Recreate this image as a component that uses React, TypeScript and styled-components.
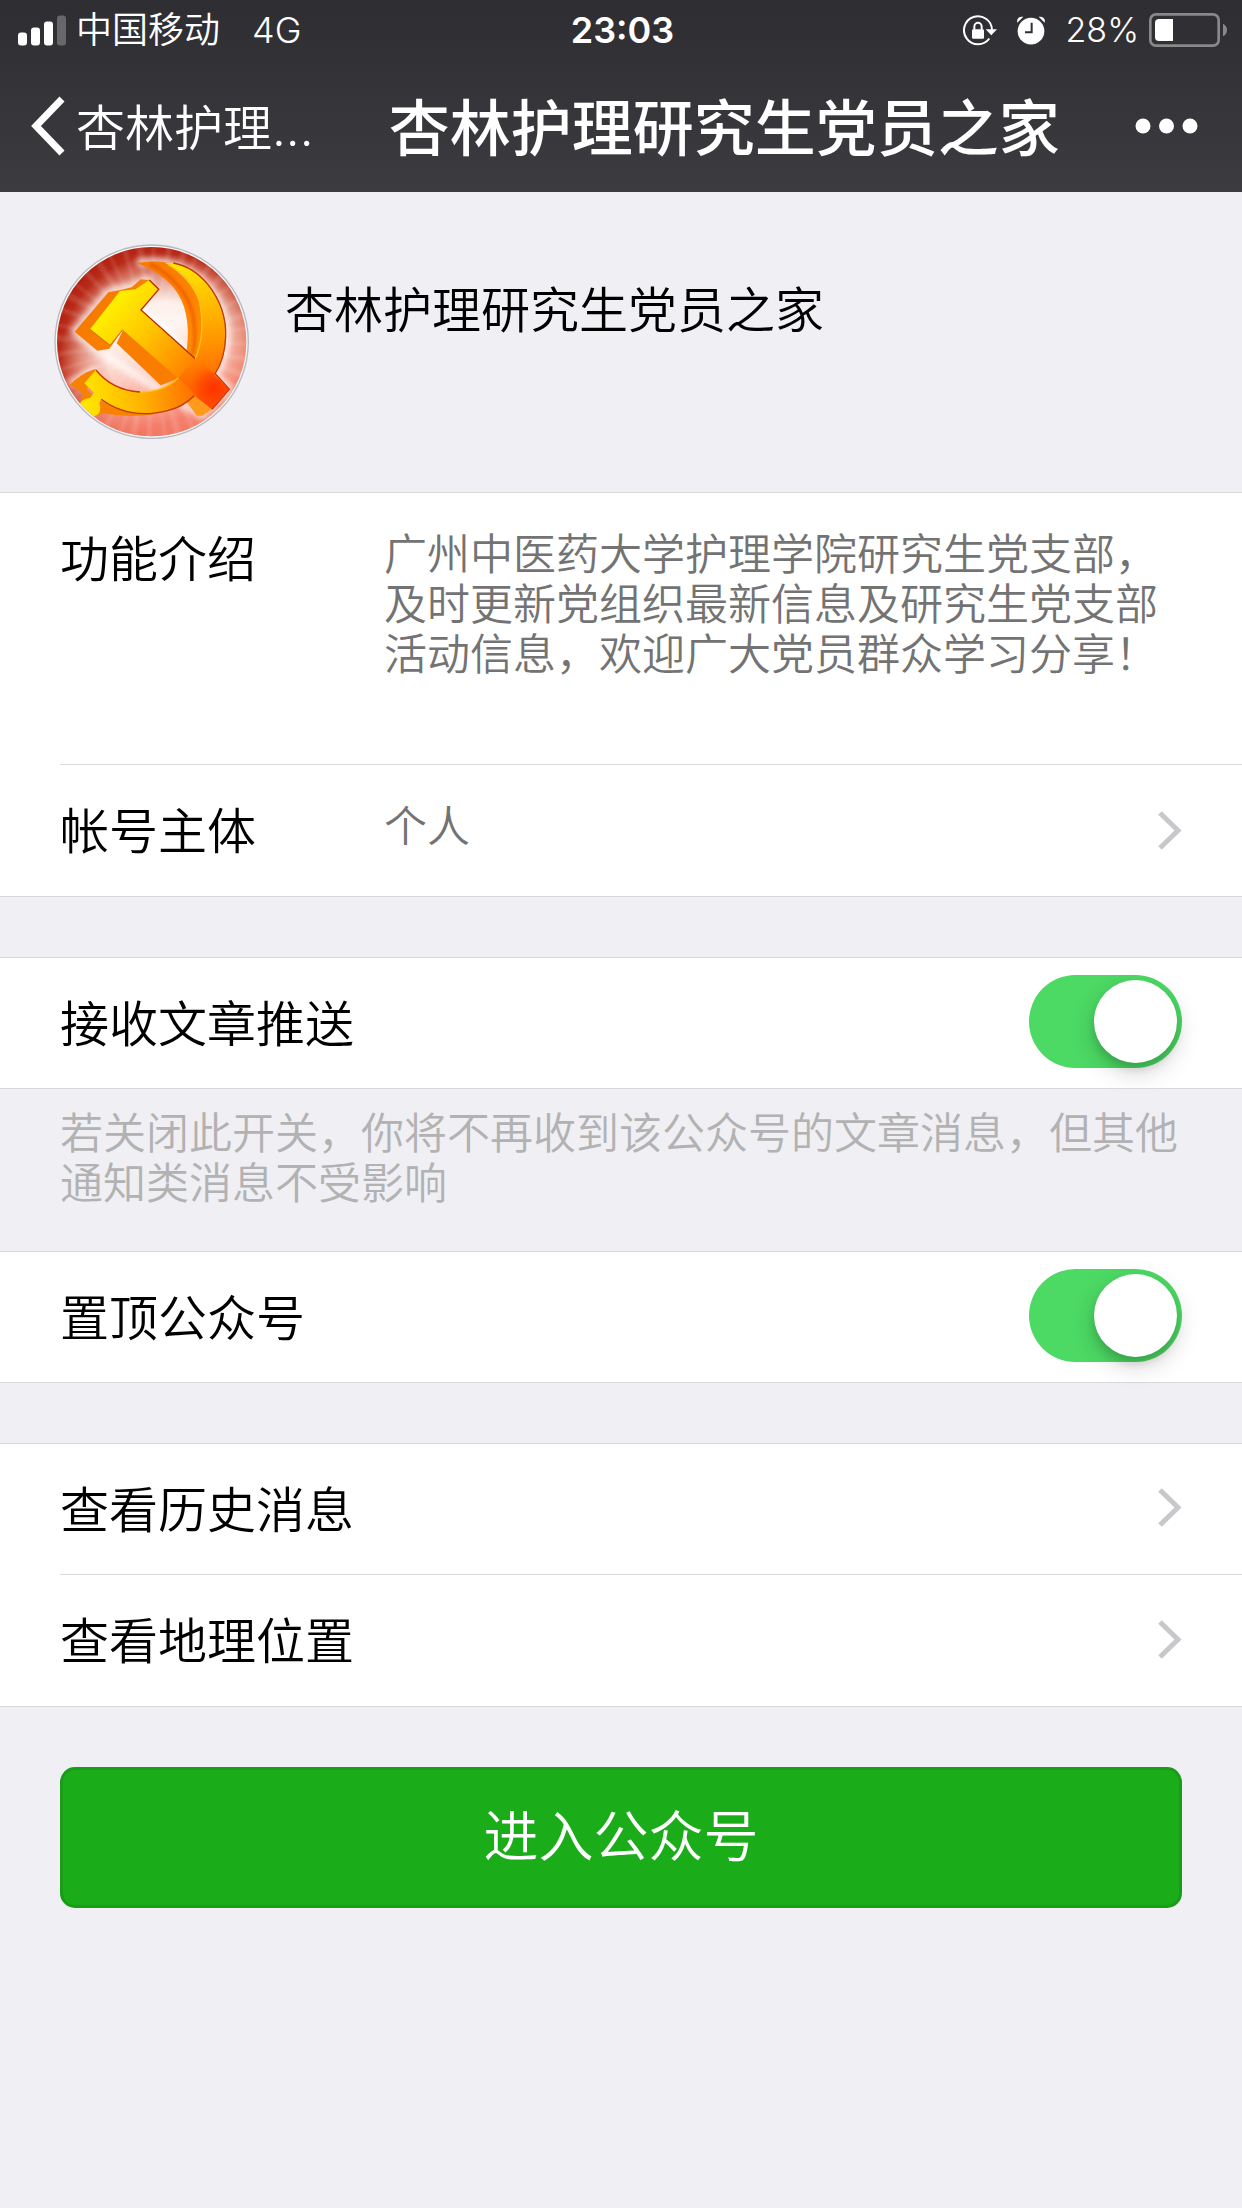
import React, { useId } from 'react';
import styled, { createGlobalStyle } from 'styled-components';

const GlobalStyle = createGlobalStyle`
  *, *::before, *::after { box-sizing: border-box; }
  html { background: #efeff4; }
  body {
    margin: 0;
    background: #efeff4;
    color: #000;
    font-family: Inter, "Noto Sans CJK SC", sans-serif;
    font-weight: 350;
  }
`;

const Header = styled.header`
  background: linear-gradient(#2e2d32, #3c3b40);
  color: #fff;
`;

const StatusBar = styled.div`
  display: grid;
  grid-template-columns: 1fr auto 1fr;
  align-items: center;
  height: 60px;
  padding: 0 15px 0 18px;
  font-size: 36px;
  line-height: 60px;
  white-space: nowrap;

  svg { display: block; flex: none; }
`;

const StatusLeft = styled.div`
  display: flex;
  align-items: center;
  gap: 10px;
`;

const Network = styled.span`
  margin-left: 22px;
`;

const Clock = styled.time`
  font-weight: 600;
`;

const StatusRight = styled.div`
  display: flex;
  align-items: center;
  justify-content: flex-end;
  gap: 20px;
`;

const Power = styled.span`
  display: flex;
  align-items: center;
  gap: 10px;
  font-size: 34px;
`;

const NavBar = styled.nav`
  display: flex;
  align-items: center;
  justify-content: space-between;
  height: 132px;
  padding: 0 44px 0 31px;
`;

const NavButton = styled.button`
  display: flex;
  align-items: center;
  gap: 10px;
  padding: 0;
  border: 0;
  background: none;
  color: inherit;
  font: inherit;
  font-size: 49px;
  line-height: 60px;
  white-space: nowrap;
  cursor: pointer;

  span { padding-top: 6px; }
`;

const Title = styled.h1`
  margin: 0;
  padding-top: 6px;
  font-size: 61px;
  font-weight: 500;
  line-height: 80px;
  white-space: nowrap;
`;

const Profile = styled.section`
  display: flex;
  align-items: flex-start;
  gap: 36px;
  padding: 52px 54px 53px;

  svg { display: block; flex: none; }
`;

const ProfileName = styled.h2`
  margin: 42px 0 0;
  font-size: 49px;
  font-weight: inherit;
  line-height: 50px;
`;

const Group = styled.section<{ $spaced?: boolean }>`
  margin-top: ${(p) => (p.$spaced ? '60px' : '0')};
  padding-left: 60px;
  border-top: 1px solid #d9d9d9;
  border-bottom: 1px solid #d9d9d9;
  background: #fff;

  > * + * { border-top: 1px solid #d9d9d9; }
`;

const Row = styled.div`
  display: flex;
  align-items: center;
  justify-content: space-between;
  min-height: 130px;
  padding-right: 60px;
  padding-bottom: 3px;
  color: inherit;
  text-decoration: none;
  font-size: 49px;
  line-height: 50px;

  & + & { min-height: 132px; }
  svg { display: block; flex: none; }
`;

const RowLabel = styled.span`
  padding-top: 6px;
`;

const DetailRow = styled(Row)`
  display: grid;
  grid-template-columns: 324px 1fr auto;
  align-items: start;
  padding-top: 36px;
  padding-bottom: 36px;

  svg { align-self: center; }
`;

const IntroRow = styled(DetailRow)`
  padding-bottom: 85px;
`;

const DetailValue = styled.span`
  color: #737373;
  font-size: 43px;
`;

const Switch = styled.input`
  appearance: none;
  display: flex;
  align-items: center;
  width: 153px;
  height: 93px;
  margin: 0;
  padding: 5px;
  border-radius: 47px;
  background: #e5e5e5;
  cursor: pointer;

  &::before {
    content: '';
    width: 83px;
    height: 83px;
    border-radius: 50%;
    background: #fff;
    box-shadow: 0 9px 24px rgba(0, 0, 0, 0.18), 0 6px 8px rgba(0, 0, 0, 0.12);
  }

  &:checked {
    justify-content: flex-end;
    background: #4cd964;
  }
`;

const Note = styled.p`
  margin: 0;
  padding: 19px 60px 43px;
  color: #b2b2b2;
  font-size: 43px;
  line-height: 50px;
`;

const Actions = styled.div`
  padding: 60px;
`;

const EnterButton = styled.button`
  display: block;
  width: 100%;
  height: 141px;
  padding: 0 0 3px;
  border: 3px solid #1a9c18;
  border-radius: 15px;
  background: #1aad19;
  color: #fff;
  font: inherit;
  font-size: 55px;
  line-height: 60px;
  cursor: pointer;
`;

const SignalIcon = () => (
  <svg width="48" height="31" viewBox="54 44 144 92" aria-hidden="true">
    <g fill="#fff">
      <rect x="54" y="96" width="27" height="39" rx="9" />
      <rect x="93" y="81" width="27" height="54" rx="9" />
      <rect x="132" y="63" width="27" height="72" rx="9" />
      <rect x="171" y="45" width="27" height="90" rx="9" opacity="0.27" />
    </g>
  </svg>
);

const RotationLockIcon = () => (
  <svg width="34" height="31" viewBox="435 44 102 92" aria-hidden="true">
    <path d="M522 88A42 42 0 1 0 514 114" fill="none" stroke="#fff" strokeWidth="6" />
    <path d="M503 86h34l-17 18z" fill="#fff" />
    <rect x="462" y="86" width="36" height="29" rx="4" fill="#fff" />
    <path d="M469 88v-10a11 11 0 0 1 22 0v10" fill="none" stroke="#fff" strokeWidth="6" />
  </svg>
);

const AlarmIcon = () => (
  <svg width="28" height="29" viewBox="597 47 84 86" aria-hidden="true">
    <circle cx="639" cy="92" r="40" fill="#fff" />
    <path d="M598 67C595 54 603 47 616 49zM680 67C683 54 675 47 662 49z" fill="#fff" />
    <path d="M641 67v28h-20" fill="none" stroke="#2f2e33" strokeWidth="6" />
  </svg>
);

const BatteryIcon = () => (
  <svg width="78" height="34" viewBox="987 39 234 102" aria-hidden="true">
    <rect x="991" y="43" width="205" height="94" rx="17" fill="none" stroke="#89888b" strokeWidth="8" />
    <path d="M1059 57v66h-42q-12 0-12-12v-42q0-12 12-12z" fill="#fff" />
    <path d="M1209 71q12 6 12 19t-12 19z" fill="#89888b" />
  </svg>
);

const BackIcon = () => (
  <svg width="35" height="60" viewBox="0 0 35 60" aria-hidden="true">
    <path d="M31 3L5 30l26 27" fill="none" stroke="#fff" strokeWidth="7" />
  </svg>
);

const MoreIcon = () => (
  <svg width="63" height="16" viewBox="0 0 63 16" aria-hidden="true">
    <g fill="#fff">
      <circle cx="8" cy="8" r="7.5" />
      <circle cx="31.500" cy="8" r="7.5" />
      <circle cx="55" cy="8" r="7.5" />
    </g>
  </svg>
);

const ChevronIcon = () => (
  <svg width="24" height="39" viewBox="0 0 24 39" aria-hidden="true">
    <path d="M2 2l18 17.500L2 37" fill="none" stroke="#c7c7cc" strokeWidth="5" />
  </svg>
);

const rays = Array.from({ length: 40 }, (_, i) => {
  const from = (i * 9 * Math.PI) / 180;
  const to = ((i * 9 + 2 + (i % 3)) * Math.PI) / 180;
  const at = (a: number) => `${(335 + 330 * Math.cos(a)).toFixed(0)} ${(335 + 330 * Math.sin(a)).toFixed(0)}`;
  return `M335 335L${at(from)}L${at(to)}z`;
}).join('');

const EmblemAvatar = () => (
  <svg width="195" height="195" viewBox="42 42 585 585" role="img" aria-label="党徽">
    <defs>
      <radialGradient id="glow" gradientUnits="userSpaceOnUse" cx="375" cy="385" r="375">
        <stop offset="0" stopColor="#fff" />
        <stop offset="0.45" stopColor="#fdf0ea" />
        <stop offset="0.68" stopColor="#e08b78" />
        <stop offset="0.84" stopColor="#b92a18" />
        <stop offset="1" stopColor="#ac1609" />
      </radialGradient>
      <linearGradient id="floor" x1="0" y1="0" x2="0.3" y2="1">
        <stop offset="0.55" stopColor="#ff8a70" stopOpacity="0" />
        <stop offset="1" stopColor="#f4705a" stopOpacity="0.85" />
      </linearGradient>
      <linearGradient id="gold" gradientUnits="userSpaceOnUse" x1="200" y1="210" x2="540" y2="510">
        <stop offset="0" stopColor="#fff500" />
        <stop offset="0.35" stopColor="#ffc400" />
        <stop offset="0.7" stopColor="#ff8500" />
        <stop offset="1" stopColor="#ff2f00" />
      </linearGradient>
      <linearGradient id="blade" gradientUnits="userSpaceOnUse" x1="420" y1="100" x2="480" y2="500">
        <stop offset="0" stopColor="#ffe800" />
        <stop offset="0.45" stopColor="#ffac00" />
        <stop offset="1" stopColor="#ff5a00" />
      </linearGradient>
      <linearGradient id="grip" gradientUnits="userSpaceOnUse" x1="130" y1="480" x2="460" y2="440">
        <stop offset="0" stopColor="#ffe600" />
        <stop offset="0.5" stopColor="#ffb400" />
        <stop offset="1" stopColor="#ff6e00" />
      </linearGradient>
      <linearGradient id="edge" gradientUnits="userSpaceOnUse" x1="110" y1="250" x2="480" y2="540">
        <stop offset="0" stopColor="#f47a00" />
        <stop offset="0.5" stopColor="#ff8200" />
        <stop offset="1" stopColor="#ffa000" />
      </linearGradient>
      <radialGradient id="ember" gradientUnits="userSpaceOnUse" cx="520" cy="475" r="85">
        <stop offset="0" stopColor="#ff3200" />
        <stop offset="0.5" stopColor="#ff4a00" stopOpacity="0.8" />
        <stop offset="1" stopColor="#ff7000" stopOpacity="0" />
      </radialGradient>
      <filter id="halo" x="-20%" y="-20%" width="140%" height="140%">
        <feGaussianBlur stdDeviation="10" />
      </filter>
      <filter id="soft">
        <feGaussianBlur stdDeviation="4" />
      </filter>
      <clipPath id="disc"><circle cx="335" cy="335" r="284" /></clipPath>
    </defs>
    <circle cx="335" cy="335" r="290" fill="#f7f7fa" stroke="#b9b9be" strokeWidth="4" />
    <g clipPath="url(#disc)">
      <rect x="42" y="42" width="585" height="585" fill="url(#glow)" />
      <rect x="42" y="42" width="585" height="585" fill="url(#floor)" />
      <path d={rays} fill="#fff" opacity="0.12" filter="url(#soft)" />
      <g fill="none" stroke="#fff" strokeWidth="22" opacity="0.75" filter="url(#halo)" strokeLinejoin="round">
        <path d="M104 305L205 185L270 172L325 150L303 240L466 385L568 478L485 558L172 362z" />
        <path d="M290 98Q400 82 480 145Q570 230 558 340Q550 390 525 430M90 465L168 418" />
      </g>
      <path d="M290 99Q335 90 385 98L490 200L500 310L466 386L440 360Q456 240 400 172Q360 125 290 99z" fill="url(#edge)" />
      <path d="M330 101Q440 160 460 260Q470 320 458 375" fill="none" stroke="#e94e00" strokeWidth="9" opacity="0.7" filter="url(#soft)" />
      <path d="M104 305L205 187L242 180L275 172L302 148L330 150L250 298L208 356L172 362z" fill="url(#edge)" />
      <path d="M250 298L230 340L362 466L420 444z" fill="#f97d00" />
      <path d="M435 508L462 494L518 536L487 557L470 557z" fill="#ff9b1a" />
      <path d="M150 298L240 183L286 178L328 150L356 178L303 240L466 386L568 478L516 538L462 496L412 443L248 299L210 346z" fill="url(#gold)" />
      <path d="M328 150L356 178L303 240L466 386M525 430L568 478L516 538" fill="none" stroke="#b72a00" strokeWidth="4" />
      <path d="M150 298L210 346L248 299" fill="none" stroke="#d66b00" strokeWidth="3" />
      <path d="M90 465Q120 430 168 416L140 478L152 490L180 510Q260 560 350 551Q270 566 190 550L168 558L120 520L130 490z" fill="#f78200" />
      <path d="M375 98Q440 98 492 150Q560 225 558 320Q556 385 525 432L462 497L415 443L466 386Q498 310 478 220Q455 145 375 98z" fill="url(#blade)" />
      <path d="M133 460L168 420Q215 480 300 486Q370 486 415 443L470 496Q430 530 385 541Q270 572 184 508L178 520Q188 552 162 559Q142 560 120 520Q128 506 150 504L162 488z" fill="url(#grip)" />
      <path d="M466 386L525 432L568 478L516 538L462 496L412 443z" fill="url(#ember)" />
      <path d="M400 99Q460 110 505 165Q560 235 557 320Q555 385 525 432M462 497Q430 530 385 541Q270 572 184 508M168 420Q215 480 300 486" fill="none" stroke="#c43a00" strokeWidth="4" />
      <path d="M385 104Q455 145 478 210Q498 310 466 386M300 486Q370 486 415 443" fill="none" stroke="#ffc21a" strokeWidth="4" />
    </g>
  </svg>
);

const SwitchRow = ({ label }: { label: string }) => {
  const id = useId();
  return (
    <Row>
      <RowLabel as="label" htmlFor={id}>{label}</RowLabel>
      <Switch id={id} type="checkbox" role="switch" defaultChecked />
    </Row>
  );
};

const LinkRow = ({ label }: { label: string }) => (
  <Row as="a" href="#">
    <RowLabel>{label}</RowLabel>
    <ChevronIcon />
  </Row>
);

export default function App() {
  return (
    <>
      <GlobalStyle />
      <Header>
        <StatusBar>
          <StatusLeft>
            <SignalIcon />
            <span>中国移动</span>
            <Network>4G</Network>
          </StatusLeft>
          <Clock>23:03</Clock>
          <StatusRight>
            <RotationLockIcon />
            <AlarmIcon />
            <Power>
              <span>28%</span>
              <BatteryIcon />
            </Power>
          </StatusRight>
        </StatusBar>
        <NavBar>
          <NavButton type="button">
            <BackIcon />
            <span>杏林护理...</span>
          </NavButton>
          <Title>杏林护理研究生党员之家</Title>
          <NavButton type="button" aria-label="更多">
            <MoreIcon />
          </NavButton>
        </NavBar>
      </Header>
      <main>
        <Profile>
          <EmblemAvatar />
          <ProfileName>杏林护理研究生党员之家</ProfileName>
        </Profile>
        <Group>
          <IntroRow>
            <RowLabel>功能介绍</RowLabel>
            <DetailValue>
              广州中医药大学护理学院研究生党支部，及时更新党组织最新信息及研究生党支部活动信息，欢迎广大党员群众学习分享！
            </DetailValue>
          </IntroRow>
          <DetailRow as="a" href="#">
            <RowLabel>帐号主体</RowLabel>
            <DetailValue>个人</DetailValue>
            <ChevronIcon />
          </DetailRow>
        </Group>
        <Group $spaced>
          <SwitchRow label="接收文章推送" />
        </Group>
        <Note>若关闭此开关，你将不再收到该公众号的文章消息，但其他通知类消息不受影响</Note>
        <Group>
          <SwitchRow label="置顶公众号" />
        </Group>
        <Group $spaced>
          <LinkRow label="查看历史消息" />
          <LinkRow label="查看地理位置" />
        </Group>
        <Actions>
          <EnterButton type="button">进入公众号</EnterButton>
        </Actions>
      </main>
    </>
  );
}
